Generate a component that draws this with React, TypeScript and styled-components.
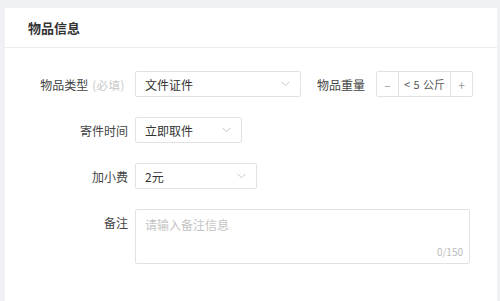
import React, { FC } from 'react';
import styled, { createGlobalStyle } from 'styled-components';

const Global = createGlobalStyle`
  html, body {
    margin: 0;
    padding: 0;
    background: #f0f1f5;
    font-family: "Noto Sans CJK SC", "Noto Sans", sans-serif;
    color: #333;
  }
`;

const Page = styled.div`
  padding: 8px 3px 0 5px;
  height: 301px;
  box-sizing: border-box;
`;

const Card = styled.div`
  background: #fff;
  height: 100%;
`;

const Header = styled.div`
  height: 39px;
  padding-left: 23px;
  display: flex;
  align-items: center;
  font-size: 13px;
  font-weight: 700;
  color: #333;
  border-bottom: 1px solid #ececec;
`;

const Form = styled.div`
  padding-top: 23px;
  display: flex;
  flex-direction: column;
  gap: 20px;
`;

const Row = styled.div<{ $top?: boolean }>`
  display: grid;
  grid-template-columns: 123px 1fr;
  column-gap: 7px;
  align-items: ${(p) => (p.$top ? 'start' : 'center')};
`;

const Label = styled.div<{ $top?: boolean }>`
  text-align: right;
  font-size: 12px;
  color: #444;
  white-space: nowrap;
  padding-top: ${(p) => (p.$top ? '5px' : '0')};
`;

const Hint = styled.span`
  color: #c8c8c8;
  font-size: 11.5px;
  margin: 0 3px 0 4px;
  letter-spacing: 0.5px;
`;

const Fields = styled.div`
  display: flex;
  align-items: center;
`;

const Select = styled.div<{ $w: number }>`
  width: ${(p) => p.$w}px;
  height: 26px;
  box-sizing: border-box;
  border: 1px solid #e2e2e2;
  border-radius: 2px;
  display: flex;
  align-items: center;
  justify-content: space-between;
  padding: 0 10px 0 9px;
  font-size: 12px;
  color: #333;
`;

const SideLabel = styled.div`
  font-size: 12px;
  color: #444;
  margin: 0 11px 0 16px;
`;

const Counter = styled.div`
  display: flex;
  height: 26px;
  box-sizing: border-box;
  border: 1px solid #e2e2e2;
  border-radius: 2px;
`;

const Step = styled.div`
  width: 21px;
  display: flex;
  align-items: center;
  justify-content: center;
  color: #999;
  font-size: 12px;
`;

const Value = styled.div`
  width: 51px;
  border-left: 1px solid #e2e2e2;
  border-right: 1px solid #e2e2e2;
  display: flex;
  align-items: center;
  justify-content: center;
  font-size: 11px;
  color: #555;
  word-spacing: 1px;
`;

const TextArea = styled.div`
  width: 335px;
  height: 55px;
  box-sizing: border-box;
  border: 1px solid #e2e2e2;
  border-radius: 2px;
  padding: 6px 6px 4px 9px;
  display: flex;
  flex-direction: column;
  justify-content: space-between;
  font-size: 12px;
`;

const Placeholder = styled.div`
  color: #c4c4c4;
`;

const Count = styled.div`
  text-align: right;
  color: #bbb;
  font-size: 10px;
`;

const Chevron: FC = () => (
  <svg width="9" height="6" viewBox="0 0 9 6">
    <path d="M0.5 0.8 L4.5 4.8 L8.5 0.8" fill="none" stroke="#c6c6c6" strokeWidth="1" />
  </svg>
);

const Dropdown: FC<{ value: string; width: number }> = ({ value, width }) => (
  <Select $w={width}>
    <span>{value}</span>
    <Chevron />
  </Select>
);

const App: FC = () => (
  <Page>
    <Global />
    <Card>
      <Header>物品信息</Header>
      <Form>
        <Row>
          <Label>
            物品类型<Hint>(必填)</Hint>
          </Label>
          <Fields>
            <Dropdown value="文件证件" width={166} />
            <SideLabel>物品重量</SideLabel>
            <Counter>
              <Step>–</Step>
              <Value>&lt; 5 公斤</Value>
              <Step>+</Step>
            </Counter>
          </Fields>
        </Row>
        <Row>
          <Label>寄件时间</Label>
          <Fields>
            <Dropdown value="立即取件" width={107} />
          </Fields>
        </Row>
        <Row>
          <Label>加小费</Label>
          <Fields>
            <Dropdown value="2元" width={122} />
          </Fields>
        </Row>
        <Row $top>
          <Label $top>备注</Label>
          <TextArea>
            <Placeholder>请输入备注信息</Placeholder>
            <Count>0/150</Count>
          </TextArea>
        </Row>
      </Form>
    </Card>
  </Page>
);

export default App;
